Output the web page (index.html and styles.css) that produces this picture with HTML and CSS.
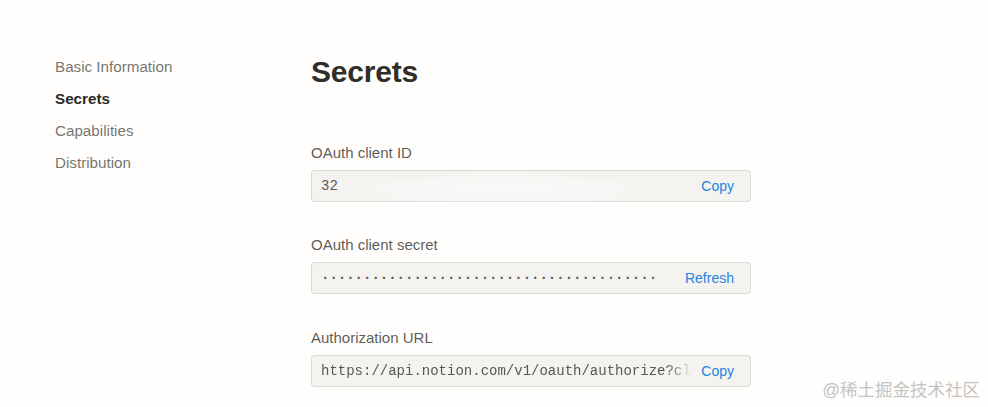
FILE: index.html
```html
<!DOCTYPE html>
<html lang="en">
<head>
<meta charset="utf-8">
<title>Secrets</title>
<link rel="stylesheet" href="styles.css">
</head>
<body>
<div class="page">
  <nav class="sidebar">
    <a class="nav-item">Basic Information</a>
    <a class="nav-item active">Secrets</a>
    <a class="nav-item">Capabilities</a>
    <a class="nav-item">Distribution</a>
  </nav>
  <main class="main">
    <h1 class="title">Secrets</h1>
    <section class="group">
      <div class="label">OAuth client ID</div>
      <div class="field">
        <span class="value">32</span>
        <span class="smudge"></span>
        <button class="action">Copy</button>
      </div>
    </section>
    <section class="group group-wide">
      <div class="label">OAuth client secret</div>
      <div class="field">
        <span class="value dots">········································</span>
        <button class="action">Refresh</button>
      </div>
    </section>
    <section class="group">
      <div class="label">Authorization URL</div>
      <div class="field">
        <span class="value fade">https://api.notion.com/v1/oauth/authorize?cl</span>
        <button class="action">Copy</button>
      </div>
    </section>
  </main>
</div>
<div class="watermark">@稀土掘金技术社区</div>
</body>
</html>
```

FILE: styles.css
```css
html, body {
  margin: 0;
  padding: 0;
  background: #fffefc;
  font-family: "Liberation Sans", Arial, "Noto Sans CJK SC", sans-serif;
  color: #37352f;
}

.page {
  display: flex;
  padding: 51px 0 0 55px;
}

.sidebar {
  display: flex;
  flex-direction: column;
  width: 256px;
  flex: none;
}

.nav-item {
  font-size: 15.2px;
  line-height: 32px;
  color: rgba(55, 53, 47, 0.7);
  cursor: pointer;
}

.nav-item.active {
  color: #2b2a26;
  font-weight: 600;
}

.main {
  width: 440px;
  display: flex;
  flex-direction: column;
}

.title {
  margin: 3px 0 53px;
  font-size: 30px;
  line-height: 36px;
  font-weight: 700;
  color: #2f2e2a;
  letter-spacing: -0.2px;
}

.group {
  display: flex;
  flex-direction: column;
  gap: 7px;
  margin-bottom: 33px;
}

.group-wide {
  margin-bottom: 34px;
}

.label {
  font-size: 15px;
  line-height: 20px;
  color: rgba(55, 53, 47, 0.82);
  font-weight: 500;
}

.field {
  position: relative;
  display: flex;
  align-items: center;
  height: 32px;
  box-sizing: border-box;
  border: 1px solid rgba(55, 53, 47, 0.13);
  border-radius: 4px;
  background: #f4f3f0;
  padding: 0 8px 0 9px;
}

.value {
  flex: 1;
  min-width: 0;
  overflow: hidden;
  white-space: nowrap;
  font-family: "Liberation Mono", "Courier New", monospace;
  font-size: 14px;
  color: #5a5853;
}

.dots {
  font-weight: 700;
}

.fade {
  -webkit-mask-image: linear-gradient(to right, #000 calc(100% - 26px), transparent 100%);
  mask-image: linear-gradient(to right, #000 calc(100% - 26px), transparent 100%);
}

.smudge {
  position: absolute;
  left: 30px;
  top: 2px;
  width: 320px;
  height: 34px;
  background: radial-gradient(ellipse at center, rgba(255, 255, 255, 0.5) 0%, rgba(255, 255, 255, 0.28) 50%, rgba(255, 255, 255, 0) 72%);
  pointer-events: none;
}

.action {
  flex: none;
  border: 0;
  background: transparent;
  font-family: "Liberation Sans", Arial, sans-serif;
  font-size: 14px;
  color: #2383e2;
  padding: 0 8px;
  cursor: pointer;
  line-height: 20px;
}

.watermark {
  position: absolute;
  right: 8px;
  top: 377px;
  font-size: 17.5px;
  line-height: 26px;
  color: #c4c4c4;
  font-family: "Liberation Sans", "Noto Sans CJK SC", sans-serif;
}
```
